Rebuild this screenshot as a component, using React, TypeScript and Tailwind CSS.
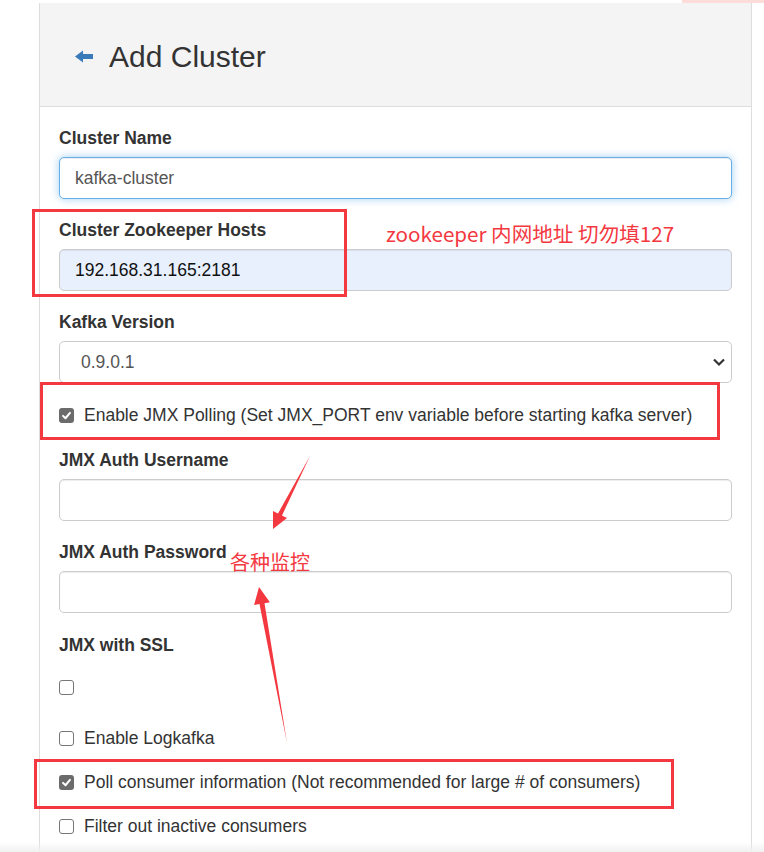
import React from "react";

function Check({ checked }: { checked?: boolean }) {
  if (checked) {
    return (
      <span className="flex h-[15px] w-[15px] shrink-0 items-center justify-center rounded-[3px] bg-[#6b6b6b]">
        <svg width="11" height="11" viewBox="0 0 12 12">
          <path d="M2.2 6.4 L4.9 9 L9.8 3.2" fill="none" stroke="#fff" strokeWidth="2.2" strokeLinecap="round" strokeLinejoin="round" />
        </svg>
      </span>
    );
  }
  return <span className="block h-[15px] w-[15px] shrink-0 rounded-[3px] border border-[#767676] bg-white" />;
}

function Field({ label, children, className }: { label: string; children: React.ReactNode; className?: string }) {
  return (
    <div className={className ?? "mt-[19px]"}>
      <div className="h-[25px] text-[17.5px] font-bold leading-[25px] text-[#333]">{label}</div>
      <div className="mt-[6px]">{children}</div>
    </div>
  );
}

function TextBox({ value, focus, autofill }: { value?: string; focus?: boolean; autofill?: boolean }) {
  const ring = focus
    ? "border-[#66afe9] shadow-[inset_0_1px_1px_rgba(0,0,0,.075),0_0_8px_rgba(102,175,233,.6)]"
    : "border-[#ccc] shadow-[inset_0_1px_1px_rgba(0,0,0,.075)]";
  return (
    <div
      className={`flex h-[42px] items-center rounded-[5px] border px-[15px] text-[17.5px] ${ring} ${
        autofill ? "bg-[#e8f0fe] text-[#111]" : "bg-white text-[#555]"
      }`}
    >
      {value}
    </div>
  );
}

function CheckRow({ text, checked, className }: { text?: string; checked?: boolean; className?: string }) {
  return (
    <div className={`flex h-[25px] items-center gap-[10px] text-[17.5px] text-[#333] ${className ?? ""}`}>
      <Check checked={checked} />
      {text && <span>{text}</span>}
    </div>
  );
}

export default function App() {
  return (
    <div className="relative h-[852px] w-[764px] overflow-hidden bg-white font-['Liberation_Sans',Arial,'Noto_Sans_CJK_SC',sans-serif]">
      <div className="flex h-[3px]">
        <div className="flex-1 bg-white" />
        <div className="w-[82px] bg-[#fddcd9]" />
      </div>

      <div className="ml-[39px] h-[849px] w-[713px] border-x border-[#ddd]">
        <div className="flex h-[104px] items-center gap-[16px] border-b border-[#ddd] bg-[#f4f4f4] pl-[35px] pt-[4px]">
          <svg width="18" height="13" viewBox="0 0 18 13">
            <path d="M0 6.5 L8 0.5 L8 4 L18 4 L18 9 L8 9 L8 12.5 Z" fill="#3a7ab8" />
          </svg>
          <h3 className="text-[30px] font-normal leading-[33px] text-[#333]">Add Cluster</h3>
        </div>

        <div className="px-[19px] pt-[19px]">
          <Field label="Cluster Name" className="">
            <TextBox value="kafka-cluster" focus />
          </Field>
          <Field label="Cluster Zookeeper Hosts">
            <TextBox value="192.168.31.165:2181" autofill />
          </Field>
          <Field label="Kafka Version">
            <div className="flex h-[42px] items-center justify-between rounded-[5px] border border-[#ccc] bg-white pl-[21px] pr-[5px] text-[17.5px] text-[#555]">
              <span>0.9.0.1</span>
              <svg width="14" height="10" viewBox="0 0 14 10">
                <path d="M2 2.5 L7 7.5 L12 2.5" fill="none" stroke="#333" strokeWidth="2.2" />
              </svg>
            </div>
          </Field>
          <CheckRow
            className="mt-[20px]"
            checked
            text="Enable JMX Polling (Set JMX_PORT env variable before starting kafka server)"
          />
          <Field label="JMX Auth Username" className="mt-[20px]">
            <TextBox />
          </Field>
          <Field label="JMX Auth Password">
            <TextBox />
          </Field>
          <Field label="JMX with SSL" className="mt-[20px]">
            <CheckRow className="mt-[17px]" />
          </Field>
          <CheckRow className="mt-[26px]" text="Enable Logkafka" />
          <CheckRow className="mt-[19px]" checked text="Poll consumer information (Not recommended for large # of consumers)" />
          <CheckRow className="mt-[19px]" text="Filter out inactive consumers" />
        </div>
      </div>

      <div className="pointer-events-none absolute bottom-0 left-0 h-[10px] w-full bg-gradient-to-b from-transparent to-[#f1f1f1]" />

      {/* annotations */}
      <div className="pointer-events-none absolute left-[32px] top-[209px] h-[88px] w-[315px] border-[3px] border-[#f4383f]" />
      <div className="pointer-events-none absolute left-[40px] top-[382px] h-[58px] w-[680px] border-[3px] border-[#f4383f]" />
      <div className="pointer-events-none absolute left-[34px] top-[759px] h-[50px] w-[640px] border-[3px] border-[#f4383f]" />

      <div className="absolute left-[386px] top-[219px] text-[20.6px] leading-[28px] text-[#f4383f] font-['Noto_Sans_CJK_SC',sans-serif]">
        zookeeper 内网地址 切勿填127
      </div>
      <div className="absolute left-[230px] top-[548px] text-[20px] leading-[28px] text-[#f4383f] font-['Noto_Sans_CJK_SC',sans-serif]">
        各种监控
      </div>

      <svg className="pointer-events-none absolute left-0 top-0" width="764" height="852" viewBox="0 0 764 852">
        <polygon points="310,456 282,515.5 287,518 273,529 273,511 278,513.5" fill="#f4383f" />
        <polygon points="287,743 264.5,603.3 269.9,602.3 259,587 254.1,605.1 259.5,604.1" fill="#f4383f" />
      </svg>
    </div>
  );
}
